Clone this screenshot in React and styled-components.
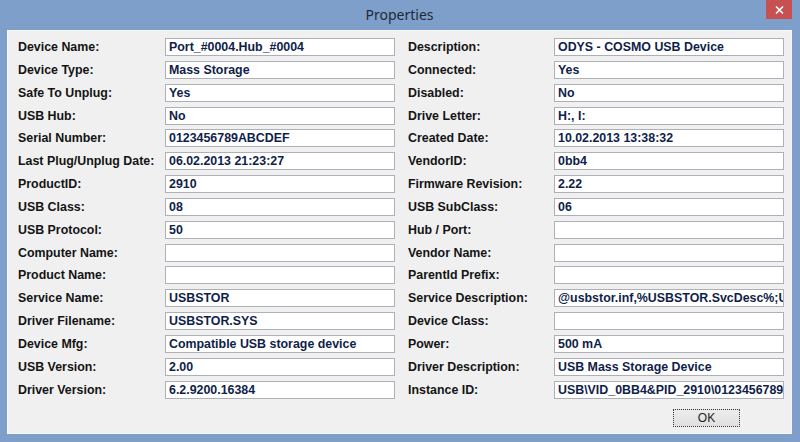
import React from "react";
import styled, { createGlobalStyle } from "styled-components";

const Global = createGlobalStyle`
  html, body { margin: 0; padding: 0; }
  body { width: 800px; height: 442px; overflow: hidden; background: #7d9fca; }
`;

const Frame = styled.div`
  width: 800px;
  height: 442px;
  box-sizing: border-box;
  background: #7e9fc9;
  display: flex;
  flex-direction: column;
  padding: 0 8px 8px 7px;
`;

const TitleBar = styled.div`
  position: relative;
  height: 29px;
  display: flex;
  align-items: center;
  justify-content: center;
  font-family: "Noto Sans", "Liberation Sans", sans-serif;
  font-size: 14px;
  color: #1e2a38;
  padding-bottom: 1px;
`;

const CloseButton = styled.div`
  position: absolute;
  top: 0;
  right: 0;
  width: 26px;
  height: 19px;
  background: #c75050;
  display: flex;
  align-items: center;
  justify-content: center;
`;

const Client = styled.div`
  flex: 1;
  background: #f0f0f0;
  border: 1px solid #f7f8fa;
  display: flex;
  flex-direction: column;
  padding: 7px 0 0 10px;
`;

const Rows = styled.div`
  display: flex;
  flex-direction: column;
  gap: 4.85px;
`;

const Row = styled.div`
  display: flex;
  gap: 13px;
`;

const Pair = styled.div`
  display: grid;
  grid-template-columns: ${(p) => p.$label}px 230px;
  align-items: center;
`;

const Label = styled.div`
  font-family: "Liberation Sans", Arial, sans-serif;
  font-weight: bold;
  font-size: 12.4px;
  color: #141414;
  white-space: nowrap;
`;

const Field = styled.div`
  height: 18px;
  box-sizing: border-box;
  background: #ffffff;
  border: 1px solid #adb0b6;
  padding: 0 0 0 3px;
  display: flex;
  align-items: center;
  overflow: hidden;
  white-space: nowrap;
  font-family: "Liberation Sans", Arial, sans-serif;
  font-weight: bold;
  font-size: 12.4px;
  color: #0f1e4a;
`;

const Footer = styled.div`
  display: flex;
  justify-content: flex-end;
  padding: 10px 51px 0 0;
`;

const OkButton = styled.div`
  width: 67px;
  height: 18px;
  box-sizing: border-box;
  background: linear-gradient(#ececec, #e0e0e0);
  border: 1px dotted #3a3a3a;
  display: flex;
  align-items: center;
  justify-content: center;
  font-family: "Liberation Sans", Arial, sans-serif;
  font-size: 12px;
  color: #222;
`;

const rows = [
  ["Device Name:", "Port_#0004.Hub_#0004", "Description:", "ODYS - COSMO USB Device"],
  ["Device Type:", "Mass Storage", "Connected:", "Yes"],
  ["Safe To Unplug:", "Yes", "Disabled:", "No"],
  ["USB Hub:", "No", "Drive Letter:", "H:, I:"],
  ["Serial Number:", "0123456789ABCDEF", "Created Date:", "10.02.2013 13:38:32"],
  ["Last Plug/Unplug Date:", "06.02.2013 21:23:27", "VendorID:", "0bb4"],
  ["ProductID:", "2910", "Firmware Revision:", "2.22"],
  ["USB Class:", "08", "USB SubClass:", "06"],
  ["USB Protocol:", "50", "Hub / Port:", ""],
  ["Computer Name:", "", "Vendor Name:", ""],
  ["Product Name:", "", "ParentId Prefix:", ""],
  ["Service Name:", "USBSTOR", "Service Description:", "@usbstor.inf,%USBSTOR.SvcDesc%;USB Mass Storage Driver"],
  ["Driver Filename:", "USBSTOR.SYS", "Device Class:", ""],
  ["Device Mfg:", "Compatible USB storage device", "Power:", "500 mA"],
  ["USB Version:", "2.00", "Driver Description:", "USB Mass Storage Device"],
  ["Driver Version:", "6.2.9200.16384", "Instance ID:", "USB\\VID_0BB4&PID_2910\\0123456789ABCDEF"],
];

export default function App() {
  return (
    <>
      <Global />
      <Frame>
        <TitleBar>
          Properties
          <CloseButton>
            <svg width="9" height="8" viewBox="0 0 9 8">
              <path d="M1 0.5 L8 7.5 M8 0.5 L1 7.5" stroke="#ffffff" strokeWidth="1.6" />
            </svg>
          </CloseButton>
        </TitleBar>
        <Client>
          <Rows>
            {rows.map(([l1, v1, l2, v2]) => (
              <Row key={l1}>
                <Pair $label={147}>
                  <Label>{l1}</Label>
                  <Field>{v1}</Field>
                </Pair>
                <Pair $label={146}>
                  <Label>{l2}</Label>
                  <Field>{v2}</Field>
                </Pair>
              </Row>
            ))}
          </Rows>
          <Footer>
            <OkButton>OK</OkButton>
          </Footer>
        </Client>
      </Frame>
    </>
  );
}
